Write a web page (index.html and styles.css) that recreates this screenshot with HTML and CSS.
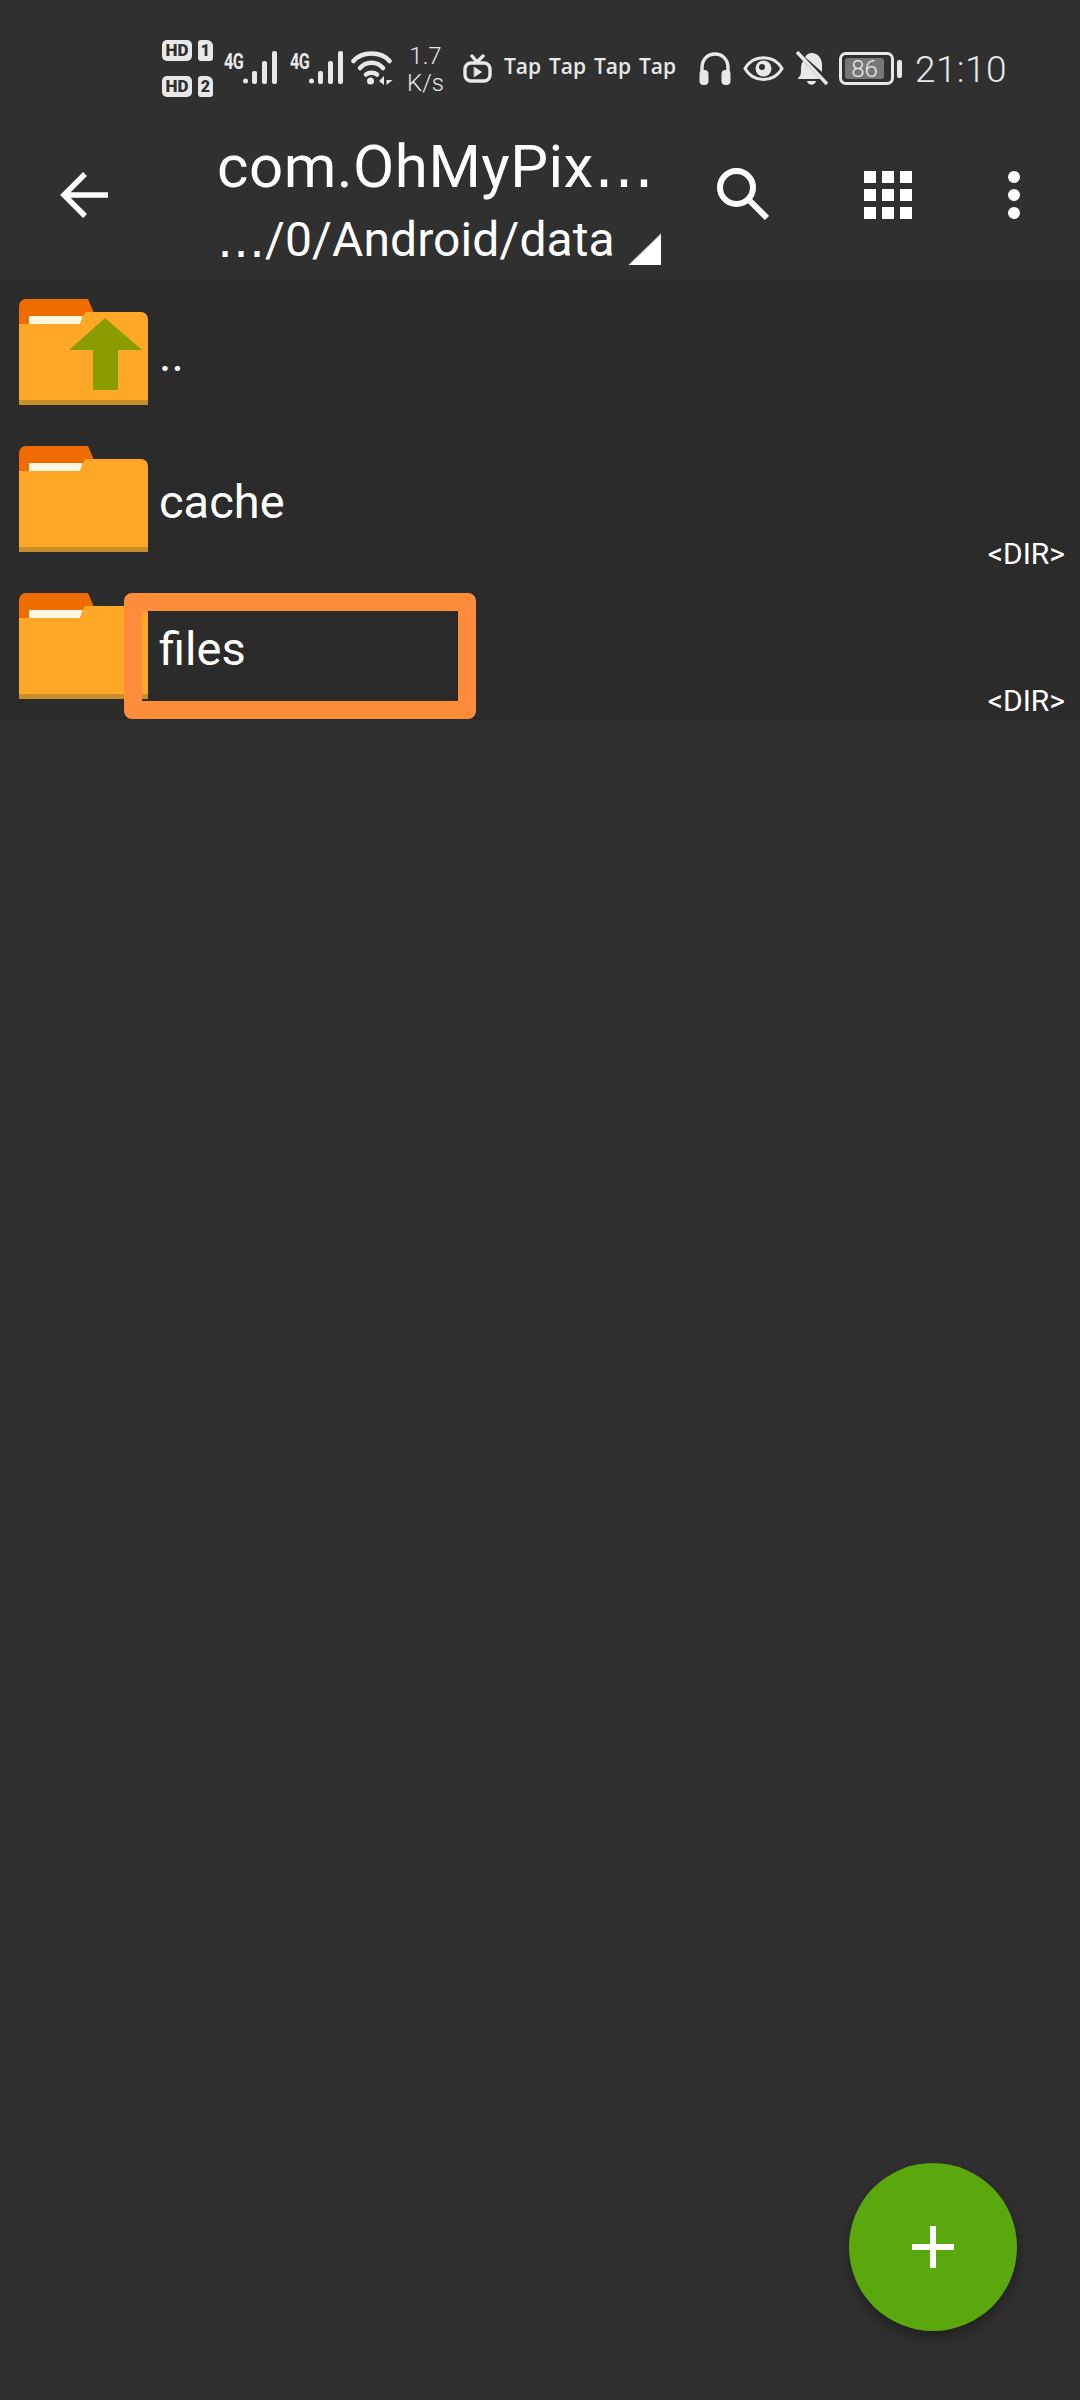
FILE: index.html
```html
<!DOCTYPE html>
<html lang="en">
<head>
<meta charset="utf-8">
<title>com.OhMyPix</title>
<link rel="stylesheet" href="styles.css">
</head>
<body>
<div class="app">
  <div class="status">
    <div class="sims">
      <div class="sim"><span class="hd">HD</span><span class="slot">1</span></div>
      <div class="sim"><span class="hd">HD</span><span class="slot">2</span></div>
    </div>
    <div class="net"><span class="g4">4G</span>
      <svg class="bars" width="35" height="33" viewBox="0 0 35 33" fill="#e8e8e8"><circle cx="2.5" cy="30" r="2.5"/><rect x="9" y="20" width="5" height="13" rx="2"/><rect x="19" y="10" width="5" height="23" rx="2"/><rect x="29" y="0" width="5" height="33" rx="2"/></svg>
    </div>
    <div class="net net2"><span class="g4">4G</span>
      <svg class="bars" width="35" height="33" viewBox="0 0 35 33" fill="#e8e8e8"><circle cx="2.5" cy="30" r="2.5"/><rect x="9" y="20" width="5" height="13" rx="2"/><rect x="19" y="10" width="5" height="23" rx="2"/><rect x="29" y="0" width="5" height="33" rx="2"/></svg>
    </div>
    <svg class="wifi" width="42" height="34" viewBox="0 0 42 34" fill="none" stroke="#e8e8e8" stroke-width="4.500" stroke-linecap="round"><path d="M2.500 10C11 0 30 0 38.500 10"/><path d="M9 17C15 10 26 10 32 17"/><path d="M15 23.500C18 21 23 21 26 23.500"/><circle cx="19.500" cy="30" r="3.500" fill="#e8e8e8" stroke="none"/><path d="M33 25l-5 5 5 4zM35.500 24v10l6-5h-6z" fill="#e8e8e8" stroke="none"/></svg>
    <div class="speed"><span>1.7</span><span>K/s</span></div>
    <svg class="tv" width="29" height="29" viewBox="0 0 29 29" fill="none" stroke="#e8e8e8" stroke-width="3.400" stroke-linecap="round" stroke-linejoin="round"><rect x="2" y="9" width="25" height="18" rx="6"/><path d="M9 2l5 6 6-6"/><path d="M11.500 13.500l7 4.500-7 4.500z" fill="#e8e8e8" stroke-width="1"/></svg>
    <div class="taps"><span>Tap</span><span>Tap</span><span>Tap</span><span>Tap</span></div>
    <svg class="hp" width="32" height="33" viewBox="0 0 32 33" fill="none"><path d="M3 22V16C3 7 9 2 16 2s13 5 13 14v6" stroke="#e8e8e8" stroke-width="3.400"/><rect x="0.500" y="18" width="9" height="15" rx="4" fill="#e8e8e8"/><rect x="22.500" y="18" width="9" height="15" rx="4" fill="#e8e8e8"/></svg>
    <svg class="eye" width="41" height="27" viewBox="0 0 41 27" fill="none"><path d="M2 13.500C10 -1 31 -1 39 13.500C31 28 10 28 2 13.500Z" stroke="#e8e8e8" stroke-width="3"/><circle cx="20.500" cy="13.500" r="8" fill="#e8e8e8"/><circle cx="19" cy="12" r="3" fill="#303030"/></svg>
    <svg class="bell" width="33" height="35" viewBox="0 0 33 35" fill="none"><path d="M3 27c3-2 3-5 3-9 0-3 .5-6 2-8l17 18H3zM10 6c1-2 4-4 6.500-4C23 2 27 7 27 14v7z" fill="#e8e8e8"/><path d="M12 30h9c-1 5-8 5-9 0z" fill="#e8e8e8"/><path d="M2 1l30 32" stroke="#e8e8e8" stroke-width="3.500"/></svg>
    <div class="battery"><div class="cell"><span class="level">86</span></div><div class="nub"></div></div>
    <div class="clock">21:10</div>
  </div>

  <header class="toolbar">
    <svg class="back" width="48" height="46" viewBox="0 0 48 46" fill="none" stroke="#fff" stroke-width="5.500"><path d="M48 23H4"/><path d="M25 2L4 23l21 21"/></svg>
    <div class="titles">
      <div class="title">com.OhMyPix<span class="ell">…</span></div>
      <div class="subtitle"><span class="ell">…</span>/0/Android/data<span class="corner"></span></div>
    </div>
    <svg class="search" width="52" height="52" viewBox="0 0 52 52" fill="none" stroke="#fff" stroke-width="6"><circle cx="19.500" cy="19.500" r="16.500"/><path d="M32 32l18 18"/></svg>
    <div class="grid9"><i></i><i></i><i></i><i></i><i></i><i></i><i></i><i></i><i></i></div>
    <div class="kebab"><i></i><i></i><i></i></div>
  </header>

  <main class="list">
    <div class="row">
      <svg class="folder" width="129" height="106" viewBox="0 0 129 106"><path d="M0 30V7a7 7 0 0 1 7-7h62l6 14v16z" fill="#ef6c00"/><path d="M10 17h54l-3 8H10z" fill="#fff8e1"/><path d="M0 25h61l4-10q1-2 3-2h54a7 7 0 0 1 7 7v81H0z" fill="#ffa726"/><rect y="101" width="129" height="5" fill="#c98e2c"/><path d="M86 19l37 32H99v40H74V51H50z" fill="#8a9c00"/></svg>
      <span class="name">..</span>
    </div>
    <div class="row">
      <svg class="folder" width="129" height="106" viewBox="0 0 129 106"><path d="M0 30V7a7 7 0 0 1 7-7h62l6 14v16z" fill="#ef6c00"/><path d="M10 17h54l-3 8H10z" fill="#fff8e1"/><path d="M0 25h61l4-10q1-2 3-2h54a7 7 0 0 1 7 7v81H0z" fill="#ffa726"/><rect y="101" width="129" height="5" fill="#c98e2c"/></svg>
      <span class="name">cache</span>
      <span class="size">&lt;DIR&gt;</span>
    </div>
    <div class="row">
      <svg class="folder" width="129" height="106" viewBox="0 0 129 106"><path d="M0 30V7a7 7 0 0 1 7-7h62l6 14v16z" fill="#ef6c00"/><path d="M10 17h54l-3 8H10z" fill="#fff8e1"/><path d="M0 25h61l4-10q1-2 3-2h54a7 7 0 0 1 7 7v81H0z" fill="#ffa726"/><rect y="101" width="129" height="5" fill="#c98e2c"/></svg>
      <span class="name">files</span>
      <span class="size">&lt;DIR&gt;</span>
      <div class="highlight"></div>
    </div>
  </main>

  <button class="fab" type="button" aria-label="Add"><span class="plus"></span></button>
</div>
</body>
</html>
```
FILE: styles.css
```css
* { box-sizing: border-box; }
html, body { margin: 0; padding: 0; background: #303030; }
body { font-family: Roboto, "Noto Sans", sans-serif; color: #fff; }
.app { position: relative; width: 1080px; height: 2400px; overflow: hidden; background: #303030; }

.status { height: 123px; display: flex; align-items: flex-start; padding: 40px 0 0 162px; color: #e8e8e8; }
.status > svg { flex: none; }
.sims { display: flex; flex-direction: column; gap: 15px; width: 51px; }
.sim { display: flex; align-items: center; gap: 6px; height: 21px; }
.hd { width: 30px; height: 21px; border-radius: 5px; background: #e8e8e8; color: #303030; font-size: 17px; line-height: 21px; font-weight: 900; text-align: center; }
.slot { width: 15px; height: 21px; border-radius: 3px 6px 3px 3px; background: #e8e8e8; color: #303030; font-size: 16px; line-height: 21px; font-weight: 900; text-align: center; }
.net { display: flex; width: 65px; margin: 11px 0 0 11px; flex: none; }
.net2 { margin-left: 1px; }
.g4 { width: 19px; font-size: 18px; line-height: 17px; font-weight: 700; letter-spacing: -0.5px; transform: scale(0.9, 1.2); transform-origin: left top; }
.bars { flex: none; }
.wifi { margin: 11px 0 0 -4px; }
.speed { width: 37px; margin: 3px 0 0 14px; display: flex; flex-direction: column; align-items: center; font-size: 24px; line-height: 27px; font-weight: 300; flex: none; }
.tv { margin: 14px 0 0 19px; }
.taps { display: flex; gap: 9px; width: 171px; margin: 13px 0 0 12px; flex: none; font-size: 21px; line-height: 26px; font-weight: 600; font-family: "Open Sans", sans-serif; }
.taps span { width: 36px; }
.hp { margin: 12px 0 0 24px; }
.eye { margin: 15px 0 0 12px; }
.bell { margin: 11px 0 0 11px; }
.battery { display: flex; align-items: center; margin: 12px 0 0 11px; flex: none; }
.cell { width: 55px; height: 33px; border: 3px solid #e8e8e8; border-radius: 7px; padding: 3px; }
.level { display: block; width: 39px; height: 21px; border-radius: 3px; background: #777; color: #e8e8e8; font-size: 24px; line-height: 22px; text-align: center; font-weight: 300; }
.nub { width: 5px; height: 18px; margin-left: 3px; border-radius: 2px; background: #e8e8e8; }
.clock { margin: 8px 0 0 13px; font-size: 37px; line-height: 44px; font-weight: 300; letter-spacing: 0.4px; }

.toolbar { height: 156px; display: flex; align-items: flex-start; padding: 0 0 0 60px; background: #303030; }
.toolbar > svg { flex: none; }
.back { margin-top: 49px; }
.titles { width: 500px; margin-left: 109px; flex: none; }
.title { font-size: 60px; line-height: 68px; margin-top: 9px; white-space: nowrap; letter-spacing: 0.5px; }
.ell { font-family: "DejaVu Sans", sans-serif; }
.subtitle { display: flex; font-size: 48px; line-height: 54px; margin-top: 12px; letter-spacing: 0.1px; white-space: nowrap; position: relative; }
.corner { position: absolute; left: 411px; top: 20px; width: 33px; height: 32px; background: linear-gradient(to bottom right, transparent 49%, #fff 53%); }
.search { margin: 45px 0 0 0; }
.grid9 { display: grid; grid-template-columns: repeat(3, 12px); gap: 6px; margin: 48px 0 0 95px; flex: none; }
.grid9 i { width: 12px; height: 12px; background: #fff; }
.kebab { display: flex; flex-direction: column; gap: 6px; margin: 48px 0 0 96px; flex: none; }
.kebab i { width: 12px; height: 12px; border-radius: 50%; background: #fff; }

.list { background: #2b2b2b; }
.row { position: relative; display: flex; align-items: flex-start; height: 147px; padding: 20px 15px 0 19px; }
.folder { flex: none; }
.name { margin: 28px 0 0 11px; font-size: 47px; line-height: 56px; }
.size { margin: auto 0 2px auto; font-size: 30px; line-height: 34px; }
.highlight { position: absolute; left: 124px; top: 20px; width: 352px; height: 126px; border: 18px solid #ff8c3b; border-radius: 8px; }

.fab { position: absolute; left: 849px; top: 2163px; width: 168px; height: 168px; border: 0; padding: 0; border-radius: 50%; background: #5ba70e; box-shadow: 0 6px 14px rgba(0,0,0,.35); display: flex; align-items: center; justify-content: center; }
.plus { position: relative; display: block; width: 42px; height: 42px; }
.plus::before { content: ""; position: absolute; left: 0; top: 18px; width: 42px; height: 6px; background: #fff; }
.plus::after { content: ""; position: absolute; left: 18px; top: 0; width: 6px; height: 42px; background: #fff; }
```
